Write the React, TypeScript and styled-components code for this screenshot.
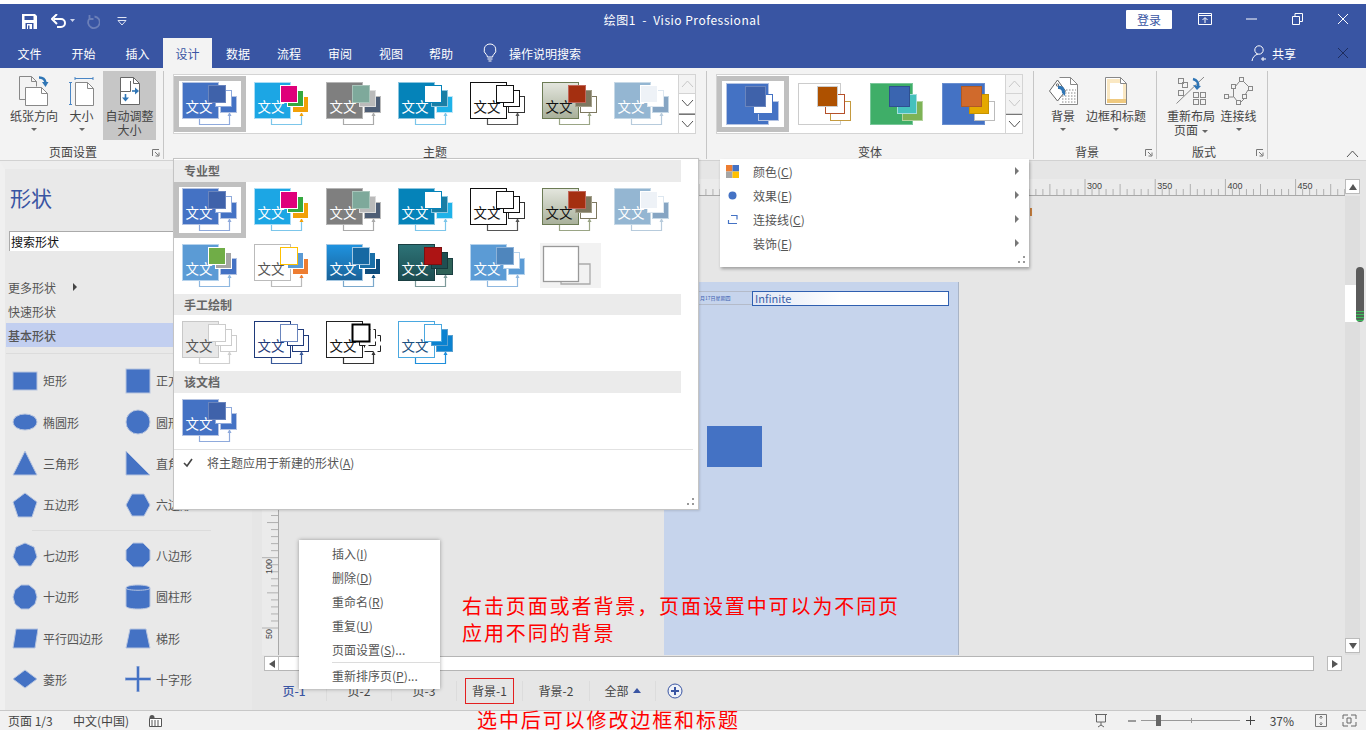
import React from 'react';
import styled, { createGlobalStyle } from 'styled-components';

const GlobalStyle = createGlobalStyle`
    html, body {
        margin: 0;
        padding: 0;
        background: #fff;
    }
    * {
        box-sizing: border-box;
    }
    u {
        text-underline-offset: 1px;
    }
`;

const BLUE = '#3955a3';
const FONT = '"Noto Sans CJK SC", "Noto Sans", sans-serif';
const RULER_FONT = '"Liberation Sans", sans-serif';

const StyledApp = styled.div`
    position: relative;
    width: 1366px;
    height: 730px;
    padding-top: 4px;
    display: flex;
    flex-direction: column;
    overflow: hidden;
    font-family: ${FONT};
    font-size: 12px;
    color: #444;
    background: #fff;
`;

/* title bar */
const TitleBar = styled.div`
    height: 34px;
    padding-bottom: 4px;
    background: ${BLUE};
    color: #fff;
    display: grid;
    grid-template-columns: 1fr auto 1fr;
    align-items: center;
`;
const QuickAccess = styled.div`
    display: flex;
    align-items: center;
    padding: 4px 0 0 22px;
`;
const QuickIcon = styled.svg<{ $ml?: number }>`
    margin-left: ${(p) => p.$ml ?? 0}px;
    flex: none;
`;
const WindowTitle = styled.div`
    margin-right: 2px;
    font-size: 12px;
    letter-spacing: 0.5px;
    white-space: pre;
`;
const WindowControls = styled.div`
    display: flex;
    align-items: center;
    justify-content: flex-end;
`;
const LoginButton = styled.div`
    width: 46px;
    height: 19px;
    background: #fff;
    color: ${BLUE};
    display: flex;
    align-items: center;
    justify-content: center;
    margin-right: 10px;
    border-radius: 1px;
`;
const WindowButton = styled.div`
    width: 46px;
    height: 30px;
    display: flex;
    align-items: center;
    justify-content: center;
`;

/* tabs */
const TabBar = styled.div`
    height: 30px;
    background: ${BLUE};
    color: #fff;
    display: flex;
    align-items: stretch;
    padding-left: 4px;
`;
const Tab = styled.div<{ $active?: boolean; $w: number }>`
    width: ${(p) => p.$w}px;
    display: flex;
    align-items: center;
    justify-content: center;
    background: ${(p) => (p.$active ? '#f3f3f3' : 'transparent')};
    color: ${(p) => (p.$active ? BLUE : '#fff')};
`;
const TellMe = styled.div`
    display: flex;
    align-items: center;
    gap: 12px;
    margin-left: 17px;
`;
const ShareArea = styled.div`
    margin-left: auto;
    display: flex;
    align-items: center;
    gap: 3px;
    padding-right: 17px;
`;
const TabClose = styled.div`
    margin-left: 38px;
    display: flex;
`;

/* ribbon */
const Ribbon = styled.div`
    height: 93px;
    flex: none;
    background: #f3f3f3;
    border-bottom: 1px solid #d2d2d2;
    display: flex;
`;
const RibbonGroup = styled.div<{ $w: number }>`
    position: relative;
    width: ${(p) => p.$w}px;
    display: flex;
    flex-direction: column;
    margin-top: 3px;
    margin-bottom: 1px;
    border-right: 1px solid #c6c6c6;
`;
const GroupBody = styled.div<{ $pad?: number }>`
    flex: 1;
    min-height: 0;
    display: flex;
    padding-left: ${(p) => p.$pad ?? 0}px;
`;
const GroupLabel = styled.div<{ $shift?: number }>`
    height: 14px;
    line-height: 14px;
    padding-right: ${(p) => p.$shift ?? 0}px;
    text-align: center;
    color: #444;
`;
const Launcher = styled.svg`
    position: absolute;
    right: 3px;
    bottom: 2px;
    width: 8px;
    height: 8px;
`;
const RibbonButton = styled.div<{ $w: number; $on?: boolean }>`
    width: ${(p) => p.$w}px;
    height: 69px;
    display: flex;
    flex-direction: column;
    align-items: center;
    padding-top: 3px;
    background: ${(p) => (p.$on ? '#c6c6c6' : 'transparent')};
    line-height: 14px;
    text-align: center;
    white-space: nowrap;
`;
const ButtonIcon = styled.div`
    height: 34px;
    margin-bottom: 1px;
    display: flex;
    align-items: center;
    justify-content: center;
`;
const Caret = styled.div`
    width: 0;
    height: 0;
    margin-top: 5px;
    border-left: 3px solid transparent;
    border-right: 3px solid transparent;
    border-top: 3px solid #666;
`;
const InlineCaret = styled(Caret)`
    display: inline-block;
    margin: 0 0 2px 4px;
`;
const Gallery = styled.div<{ $w: number }>`
    width: ${(p) => p.$w}px;
    height: 60px;
    margin-top: 3px;
    display: flex;
    background: #fff;
    border: 1px solid #d4d4d4;
`;
const GalleryItems = styled.div`
    flex: 1;
    display: flex;
    padding-top: 1px;
`;
const GalleryScroll = styled.div`
    width: 17px;
    display: flex;
    flex-direction: column;
    border-left: 1px solid #d4d4d4;
    background: #f3f3f3;
`;
const ScrollCell = styled.div<{ $strong?: boolean }>`
    flex: 1;
    display: flex;
    align-items: center;
    justify-content: center;
    border-bottom: 1px solid ${(p) => (p.$strong ? '#aaa' : '#d4d4d4')};
    background: ${(p) => (p.$strong ? '#fff' : '#f3f3f3')};
    &:last-child {
        border-bottom: 0;
        border-top: 1px solid #777;
    }
`;
const ThemeCell = styled.div<{ $selected?: boolean }>`
    width: 72px;
    height: 56px;
    flex: none;
    display: flex;
    align-items: center;
    justify-content: center;
    border: ${(p) => (p.$selected ? '5px solid #c0c0c0' : '0')};
`;
const CollapseRibbon = styled.div`
    position: absolute;
    right: 7px;
    top: 150px;
    display: flex;
`;

/* main */
const Main = styled.div`
    flex: 1;
    min-height: 0;
    display: flex;
    background: #e6e6e6;
`;
const Sidebar = styled.div`
    width: 262px;
    flex: none;
    padding-left: 5px;
    background: #e9e9e9;
    border-left: 5px solid #f0f0f0;
    border-top: 8px solid #eeeeee;
    border-right: 10px solid #e6e6e6;
    display: flex;
    flex-direction: column;
`;
const SidebarTitle = styled.div`
    height: 40px;
    margin-top: 8px;
    font-size: 21px;
    line-height: 40px;
    color: ${BLUE};
`;
const SearchBox = styled.div`
    height: 20px;
    margin: 14px 0 24px -1px;
    background: #fff;
    border-top: 1px solid #aaa;
    border-left: 1px solid #aaa;
    color: #111;
    line-height: 19px;
    padding-left: 1px;
`;
const StencilLink = styled.div<{ $on?: boolean }>`
    height: 24px;
    flex: none;
    padding-left: 2px;
    margin-left: -4px;
    color: #555;
    background: ${(p) => (p.$on ? '#c2cff0' : 'transparent')};
    font-weight: ${(p) => (p.$on ? 500 : 400)};
    display: flex;
    align-items: center;
    gap: 17px;
`;
const MoreArrow = styled.span`
    width: 0;
    height: 0;
    border-top: 4px solid transparent;
    border-bottom: 4px solid transparent;
    border-left: 4px solid #444;
`;
const SidebarRule = styled.div<{ $inset?: boolean }>`
    height: 1px;
    flex: none;
    background: #dcdcdc;
    margin: ${(p) => (p.$inset ? '4px 41px 4px 22px' : '6px 0 6px -4px')};
`;
const ShapeGrid = styled.div`
    margin-left: 2px;
    display: grid;
    grid-template-columns: 113px 113px;
    grid-auto-rows: 41.4px;
`;
const ShapeItem = styled.div`
    display: flex;
    align-items: center;
    gap: 5px;
    color: #555;
    white-space: nowrap;
`;
const ShapeIcon = styled.svg`
    width: 26px;
    height: 26px;
    flex: none;
`;

const Work = styled.div`
    flex: 1;
    min-width: 0;
    display: flex;
    flex-direction: column;
    padding-top: 18px;
`;
const RulerRow = styled.div`
    height: 17px;
    flex: none;
    display: flex;
    padding-left: 17px;
`;
const RulerTop = styled.svg`
    width: 1066px;
    height: 17px;
    display: block;
    background: #ebebeb;
`;
const CanvasRow = styled.div`
    height: 459px;
    flex: none;
    display: flex;
`;
const RulerLeft = styled.svg`
    width: 17px;
    height: 459px;
    background: #ebebeb;
    flex: none;
`;
const Canvas = styled.div`
    position: relative;
    flex: 1;
    background: #e6e6e6;
`;
const DrawingPage = styled.div`
    position: absolute;
    left: 385px;
    top: 86px;
    width: 295px;
    height: 373px;
    padding: 9px 0 0 9px;
    background: #c6d4ec;
    border-right: 1px solid #a9b4c6;
    display: flex;
    align-items: flex-start;
`;
const DateCell = styled.div`
    width: 79px;
    height: 14px;
    padding-left: 26px;
    border: 1px solid #b4bbc9;
    border-right: 0;
    font-size: 5px;
    line-height: 12px;
    color: #3a60b0;
    white-space: nowrap;
`;
const TitleBox = styled.div`
    width: 197px;
    height: 15px;
    padding-left: 2px;
    border: 1px solid #2f5fb0;
    background: linear-gradient(100deg, #dfe6f5 0%, #fff 45%);
    color: #3a60a8;
    font-size: 11px;
    line-height: 13px;
`;
const PageShape = styled.div`
    position: absolute;
    left: 43px;
    top: 144px;
    width: 55px;
    height: 41px;
    background: #4472c4;
`;
const Speck = styled.div`
    position: absolute;
    left: 751px;
    top: 12px;
    width: 2px;
    height: 8px;
    background: #c77f3f;
`;
const VScroll = styled.div`
    position: relative;
    width: 21px;
    display: flex;
    flex-direction: column;
`;
const VTrack = styled.div`
    width: 15px;
    flex: 1;
    background: #dedede;
    display: flex;
    flex-direction: column;
    justify-content: flex-end;
    padding-bottom: 2px;
`;
const ScrollArrow = styled.div`
    width: 15px;
    height: 15px;
    background: #fff;
    border: 1px solid #bbb;
    display: flex;
    align-items: center;
    justify-content: center;
    flex: none;
`;
const VThumb = styled.div`
    position: absolute;
    left: 0;
    top: 89px;
    width: 15px;
    height: 37px;
    background: #fff;
`;
const TouchHandle = styled.div`
    position: absolute;
    left: 11px;
    top: 71px;
    width: 8px;
    height: 55px;
    border-radius: 4px;
    background: repeating-linear-gradient(#3dbb5c 0 1px, #4f6a55 1px 3px) 0 44px / 100% 11px no-repeat, #5b5b5b;
`;
const HScrollRow = styled.div`
    height: 15px;
    flex: none;
    margin-top: 1px;
    display: flex;
    align-items: center;
    padding-left: 2px;
`;
const HTrack = styled.div`
    width: 1035px;
    height: 15px;
    background: #fff;
    border-top: 1px solid #b5b5b5;
    border-bottom: 1px solid #b5b5b5;
    border-right: 1px solid #b5b5b5;
`;
const HGap = styled.div`
    width: 13px;
`;
const PageTabs = styled.div`
    flex: 1;
    display: flex;
    align-items: center;
`;
const PageTab = styled.div<{ $active?: boolean; $w: number }>`
    width: ${(p) => p.$w}px;
    height: 20px;
    display: flex;
    align-items: center;
    justify-content: center;
    border-right: 1px solid #dcdcdc;
    color: ${(p) => (p.$active ? BLUE : '#444')};
    font-weight: ${(p) => (p.$active ? 500 : 400)};
`;
const MarkedLabel = styled.span`
    width: 49px;
    height: 26px;
    border: 1px solid #e32020;
    display: flex;
    align-items: center;
    justify-content: center;
`;
const UpCaret = styled.span`
    width: 0;
    height: 0;
    margin-left: 4px;
    border-left: 4px solid transparent;
    border-right: 4px solid transparent;
    border-bottom: 5px solid ${BLUE};
`;
const AddPage = styled.div`
    margin-left: 11px;
    display: flex;
`;

/* status bar */
const StatusBar = styled.div`
    height: 20px;
    flex: none;
    background: #f1f1f1;
    border-top: 1px solid #c8c8c8;
    display: flex;
    align-items: center;
    padding-left: 8px;
    color: #444;
`;
const StatusText = styled.span<{ $w: number }>`
    width: ${(p) => p.$w}px;
    white-space: pre;
`;
const StatusRight = styled.div`
    margin-left: auto;
    display: flex;
    align-items: center;
    padding-right: 9px;
`;
const StatusIcon = styled.svg<{ $mr?: number }>`
    margin-right: ${(p) => p.$mr ?? 0}px;
    flex: none;
`;
const ZoomTrack = styled.div`
    position: relative;
    width: 99px;
    height: 1px;
    margin-right: 6px;
    background: #999;
`;
const ZoomThumb = styled.div`
    position: absolute;
    left: 15px;
    top: -5px;
    width: 5px;
    height: 11px;
    background: #666;
`;
const ZoomTick = styled.div`
    position: absolute;
    left: 50px;
    top: -2px;
    width: 1px;
    height: 5px;
    background: #999;
`;
const ZoomValue = styled.span`
    margin: 0 21px 0 15px;
`;

/* floating menus */
const ThemeMenu = styled.div`
    position: absolute;
    left: 173px;
    top: 158px;
    width: 526px;
    height: 352px;
    padding-top: 1px;
    background: #fff;
    border: 1px solid #c4c4c4;
    box-shadow: 1px 1px 2px rgba(0, 0, 0, 0.12);
`;
const MenuHeader = styled.div`
    width: 507px;
    height: 21.67px;
    line-height: 21px;
    padding-left: 10px;
    background: #ebebeb;
    color: #666;
    font-weight: 700;
`;
const MenuThemes = styled.div`
    width: 504px;
    display: flex;
    flex-wrap: wrap;
`;
const MenuFootRule = styled.div`
    height: 1px;
    margin-right: 5px;
    background: #e2e2e2;
`;
const MenuFoot = styled.div`
    height: 26px;
    display: flex;
    align-items: center;
    padding-left: 9px;
    gap: 14px;
    color: #555;
`;
const Grip = styled.svg`
    position: absolute;
    right: 3px;
    bottom: 3px;
    width: 8px;
    height: 8px;
`;
const VariantMenu = styled.div`
    position: absolute;
    left: 720px;
    top: 159px;
    width: 309px;
    height: 108px;
    background: #fff;
    box-shadow: 1px 2px 3px rgba(0, 0, 0, 0.3);
`;
const VariantRow = styled.div`
    height: 24px;
    display: flex;
    align-items: center;
    padding-left: 6px;
    color: #555;
`;
const VariantIcon = styled.div`
    width: 27px;
    display: flex;
`;
const VariantArrow = styled.span`
    margin-left: auto;
    margin-right: 10px;
    width: 0;
    height: 0;
    border-top: 4px solid transparent;
    border-bottom: 4px solid transparent;
    border-left: 4px solid #777;
`;
const ContextMenu = styled.div`
    position: absolute;
    left: 299px;
    top: 540px;
    width: 141px;
    height: 149px;
    padding: 2px 0 0 33px;
    background: #fff;
    box-shadow: 0 0 4px rgba(0, 0, 0, 0.35);
    color: #555;
`;
const ContextItem = styled.div`
    height: 24px;
    line-height: 24px;
    white-space: nowrap;
`;
const ContextRule = styled.div`
    height: 1px;
    margin-bottom: 1px;
    background: #dcdcdc;
`;
const Annotation = styled.div<{ $x: number; $y: number }>`
    position: absolute;
    left: ${(p) => p.$x}px;
    top: ${(p) => p.$y}px;
    color: #f00;
    font-size: 20px;
    letter-spacing: 1.9px;
    line-height: 27px;
    white-space: pre;
`;

type Palette = {
    main: string;
    mainEnd?: string;
    border: string;
    accent: string;
    accentBorder?: string;
    second: string;
    secondBorder?: string;
    third: string;
    thirdBorder?: string;
    line: string;
    text: string;
    accentStroke?: number;
    dashed?: boolean;
};

const p = (
    main: string,
    border: string,
    accent: string,
    second: string,
    third: string,
    line: string,
    text = '#fff',
    extra: Partial<Palette> = {},
): Palette => ({ main, border, accent, second, third, line, text, ...extra });

const OFFICE = p('#4472c4', '#b4c3e2', '#3f62aa', '#fff', '#4472c4', '#8faadc', '#fff', {
    accentBorder: '#6a85bd',
    secondBorder: '#8faadc',
    thirdBorder: '#b4c3e2',
});
const ROW_ONE: Palette[] = [
    OFFICE,
    p('#1ca6e4', '#a9dcf5', '#df007a', '#35a83f', '#f2a007', '#7cc6ea', '#fff', { accentBorder: '#fff', secondBorder: '#fff', thirdBorder: '#fff' }),
    p('#7f7f7f', '#b5b5b5', '#7ea99b', '#bababa', '#4d5d75', '#aaa', '#fff', { accentBorder: '#a8c4ba', secondBorder: '#ddd', thirdBorder: '#bbb' }),
    p('#0583b9', '#8cc5de', '#fff', '#1a7ea4', '#1eb2e8', '#7cc6ea', '#fff', { accentBorder: '#0583b9', secondBorder: '#8cc5de', thirdBorder: '#bfe6f7' }),
    p('#fff', '#111', '#fff', '#fff', '#fff', '#555', '#111', { accentBorder: '#111', secondBorder: '#111', thirdBorder: '#333' }),
    p('#e4e6de', '#6c7b55', '#a42f10', '#7d7860', '#fff', '#9aa585', '#111', { mainEnd: '#a8b09a', accentBorder: '#c0665a', secondBorder: '#a39f8a', thirdBorder: '#7d7860' }),
    p('#94b6d2', '#c6d8e6', '#eef2f7', '#fff', '#86a5c3', '#b7cbdc', '#fff', { accentBorder: '#fff', secondBorder: '#dde7f0', thirdBorder: '#c6d8e6' }),
];
const ROW_TWO: Palette[] = [
    p('#5b9bd5', '#b5d2ec', '#70ad47', '#a5a5a5', '#4472c4', '#8fb8e0', '#fff', { accentBorder: '#fff', secondBorder: '#fff', thirdBorder: '#b4c3e2' }),
    p('#fff', '#bbb', '#fff', '#5b9bd5', '#ed7d31', '#bbb', '#555', { accentBorder: '#ffc000', secondBorder: '#fff', thirdBorder: '#fff' }),
    p('#1f93e0', '#a6c8e2', '#1769a3', '#1a6fa8', '#0f4d7d', '#7aa8cc', '#fff', { mainEnd: '#1a6298', accentBorder: '#a6c8e2', secondBorder: '#fff', thirdBorder: '#fff' }),
    p('#2d7377', '#1a3f42', '#ad1414', '#1f4f52', '#2f6258', '#7d9a9a', '#fff', { mainEnd: '#1c4c50', accentBorder: '#7d1010', secondBorder: '#163a3c', thirdBorder: '#1a3f42' }),
    p('#5b9bd5', '#b5d2ec', '#4f86bd', '#fff', '#5b9bd5', '#8fb8e0', '#fff', { accentBorder: '#8db2d8', secondBorder: '#b5d2ec', thirdBorder: '#b5d2ec' }),
];
const SKETCH: Palette[] = [
    p('#e8e8e8', '#c8c8c8', '#fff', '#fff', '#fff', '#cfcfcf', '#555', { accentBorder: '#ccc', secondBorder: '#ccc', thirdBorder: '#ccc' }),
    p('#fff', '#1f3a7a', '#fff', '#fff', '#fff', '#3a5a9a', '#1f3a7a', { accentBorder: '#6a85bd', secondBorder: '#1f3a7a', thirdBorder: '#1f3a7a' }),
    p('#fff', '#222', '#fff', '#fff', '#fff', '#333', '#111', { accentBorder: '#000', secondBorder: '#222', thirdBorder: '#222', accentStroke: 2, dashed: true }),
    p('#fff', '#4aa8e0', '#fff', '#0b82d0', '#0b82d0', '#1f8fdb', '#1a4f7f', { accentBorder: '#4aa8e0', secondBorder: '#5aa0d0', thirdBorder: '#5aa0d0' }),
];
const VARIANTS: Palette[] = [
    p('#4472c4', '#b4c3e2', '#3f62aa', '#fff', '#4472c4', '', '#fff', { accentBorder: '#6a85bd', secondBorder: '#4472c4', thirdBorder: '#b4c3e2' }),
    p('#fff', '#ccc', '#ae5100', '#fff', '#fff', '', '#fff', { accentBorder: '#ccc', secondBorder: '#b5502a', thirdBorder: '#c49a3f' }),
    p('#3fae68', '#7ac79a', '#3a65b0', '#45c1bd', '#7eb356', '', '#fff', { accentBorder: '#2e5090', secondBorder: '#a5dedc', thirdBorder: '#b4d39e' }),
    p('#4472c4', '#6a8fd0', '#d06a2c', '#e5a900', '#fff', '', '#fff', { accentBorder: '#b05a24', secondBorder: '#c69300', thirdBorder: '#bbb' }),
];

let gradientSeed = 0;

const ThemeThumb = ({ c }: { c: Palette }) => {
    gradientSeed += 1;
    const id = `thumb-${gradientSeed}`;
    return (
        <svg width="56" height="44" viewBox="0 0 56 44">
            {c.mainEnd && (
                <defs>
                    <linearGradient id={id} x1="0" y1="0" x2="0" y2="1">
                        <stop offset="0" stopColor={c.main} />
                        <stop offset="1" stopColor={c.mainEnd} />
                    </linearGradient>
                </defs>
            )}
            <path d="M17.500 37v5.500h30V34" fill="none" stroke={c.line} strokeWidth="1.2" />
            <path d="M47.500 30l-2 4h4z" fill={c.thirdBorder === '#fff' ? c.third : c.line} />
            <rect x="0.5" y="0.5" width="36" height="36" fill={c.mainEnd ? `url(#${id})` : c.main} stroke={c.border} />
            <rect x="38.5" y="14.5" width="16" height="16" fill={c.third} stroke={c.thirdBorder} strokeDasharray={c.dashed ? '9 4' : undefined} />
            <rect x="33.5" y="8.5" width="16" height="16" fill={c.second} stroke={c.secondBorder} strokeDasharray={c.dashed ? '11 3' : undefined} />
            <rect x="26.5" y="3.5" width="17" height="17" fill={c.accent} stroke={c.accentBorder} strokeWidth={c.accentStroke ?? 1} />
            <text x="3.5" y="30" fontSize="13.5" fill={c.text} fontFamily={FONT}>
                文文
            </text>
        </svg>
    );
};

const VariantThumb = ({ c }: { c: Palette }) => (
    <svg width="54" height="43" viewBox="0 0 54 43">
        <rect x="0.5" y="0.5" width="42" height="41" fill={c.main} stroke={c.border} />
        <rect x="32.5" y="18.5" width="20" height="19" fill={c.third} stroke={c.thirdBorder} />
        <rect x="27.5" y="11.5" width="19" height="19" fill={c.second} stroke={c.secondBorder} />
        <rect x="19.5" y="3.5" width="20" height="20" fill={c.accent} stroke={c.accentBorder} />
    </svg>
);

const BlankThumb = () => (
    <svg width="61" height="45" viewBox="0 0 61 45">
        <rect width="61" height="45" fill="#f2f2f2" />
        <path d="M21 36v5h29V21H36" fill="none" stroke="#aaa" strokeWidth="1.3" />
        <rect x="3.5" y="3.5" width="35" height="35" fill="#fff" stroke="#999" strokeWidth="1.3" />
    </svg>
);

const Chevron = ({ up, color = '#666' }: { up?: boolean; color?: string }) => (
    <svg width="13" height="8" viewBox="0 0 13 8">
        <path d={up ? 'M1 7l5.500-6L12 7' : 'M1 1l5.500 6L12 1'} fill="none" stroke={color} />
    </svg>
);

const GalleryScrollBar = ({ active }: { active?: boolean }) => (
    <GalleryScroll>
        <ScrollCell>
            <Chevron up color="#c8c8c8" />
        </ScrollCell>
        <ScrollCell $strong={active}>
            <Chevron color={active ? '#555' : '#c8c8c8'} />
        </ScrollCell>
        <ScrollCell $strong>
            <Chevron color="#555" />
        </ScrollCell>
    </GalleryScroll>
);

const OrientationIcon = () => (
    <svg width="30" height="30" viewBox="0 0 30 30">
        <path d="M6 23.500H.5V.5h12l5 5v5" fill="none" stroke="#888" />
        <path d="M12.500.5v5h5" fill="none" stroke="#888" />
        <path d="M6.500 11.500h16l6 6v12h-22z" fill="#fff" stroke="#888" />
        <path d="M22.500 11.500v6h6" fill="none" stroke="#888" />
        <path d="M20 1.500c4 0 6 1.500 6.500 5" fill="none" stroke="#2f75b5" strokeWidth="2.4" />
        <path d="M23 6l3.500 5 3-5z" fill="#2f75b5" />
    </svg>
);
const SizeIcon = () => (
    <svg width="25" height="29" viewBox="0 0 25 29">
        <path d="M6 1.500h18M6 0v3M24 0v3M1.500 5v23M0 5.500h3M0 27.500h3" fill="none" stroke="#4a86c5" />
        <path d="M6.500 5.500h12l6 6v17h-18z" fill="#fff" stroke="#888" />
        <path d="M18.500 5.500v6h6" fill="none" stroke="#888" />
    </svg>
);
const AutoSizeIcon = () => (
    <svg width="20" height="28" viewBox="0 0 20 28">
        <path d="M.5.500h13l6 6v21H.5z" fill="#fff" stroke="#666" />
        <path d="M13.500.5v6h6" fill="none" stroke="#666" />
        <path d="M.5 14.500h10V4" fill="none" stroke="#666" />
        <path d="M12 14h4" stroke="#2f75b5" strokeWidth="1.6" />
        <path d="M15 10.500l4 3.500-4 3.500z" fill="#2f75b5" />
        <path d="M5.500 17v4" stroke="#2f75b5" strokeWidth="1.6" />
        <path d="M2 20.500l3.500 4 3.500-4z" fill="#2f75b5" />
    </svg>
);
const BackgroundIcon = () => (
    <svg width="29" height="28" viewBox="0 0 29 28">
        <path d="M10.500.5h11l7 7v20h-18" fill="#fff" stroke="#888" />
        <path d="M21.500.5v7h7" fill="none" stroke="#888" />
        <path d="M17 13h10M13 16h14M13 19h14M13 22h14M13 25h14" stroke="#888" strokeDasharray="1.500 1.500" />
        <path d="M8.500 3l8 11-8 10L.5 14z" fill="#fff" stroke="#666" />
        <circle cx="8.500" cy="8" r="1.200" fill="none" stroke="#666" />
        <path d="M9 9c5-1 8 3 7 10l-3-3c0-3-1-4-4-4z" fill="#2f75b5" />
    </svg>
);
const BorderIcon = () => (
    <svg width="22" height="28" viewBox="0 0 22 28">
        <path d="M.5.500h15l6 6v21H.5z" fill="#fff" stroke="#888" />
        <path d="M15.500.5v6h6" fill="none" stroke="#888" />
        <path d="M2 2h13v4H5v16H2z" fill="#fae8c3" />
        <path d="M18 7h3v16h-3z" fill="#fae8c3" />
        <path d="M2 22h19v4H2z" fill="#efc97f" />
    </svg>
);
const RelayoutIcon = () => (
    <svg width="30" height="28" viewBox="0 0 30 28">
        <g fill="none" stroke="#888">
            <rect x="2.5" y="1.500" width="5" height="5" />
            <rect x="6.500" y="5.500" width="5" height="5" />
            <rect x="2.500" y="13.500" width="5" height="5" />
            <rect x="17.500" y="15.500" width="5" height="5" />
            <rect x="24.500" y="15.500" width="5" height="5" />
            <rect x="17.500" y="22.500" width="5" height="5" />
            <rect x="24.500" y="22.500" width="5" height="5" />
        </g>
        <path d="M.5 26.500L28 0" stroke="#888" fill="none" />
        <path d="M17 2c4 1 6 4 5 8" fill="none" stroke="#2f75b5" strokeWidth="2.400" />
        <path d="M17 8l4 5 4-4z" fill="#2f75b5" />
    </svg>
);
const ConnectorIcon = () => (
    <svg width="29" height="28" viewBox="0 0 29 28">
        <g fill="none" stroke="#888">
            <rect x="15.500" y="0.500" width="4" height="4" />
            <rect x="24.500" y="9.500" width="4" height="4" />
            <rect x="7.500" y="7.500" width="4" height="4" />
            <rect x="0.500" y="17.500" width="4" height="4" />
            <rect x="18.500" y="17.500" width="4" height="4" />
            <rect x="12.500" y="23.500" width="4" height="4" />
        </g>
        <path d="M19 4l6 6M24 13l-3 5M11 10l4-5M9.500 12v8H4.500M10 20l3 4M20.500 21.500l-4 4" fill="none" stroke="#888" />
    </svg>
);

const shapeFill = { fill: '#4472c4', stroke: '#b8c5df', strokeWidth: 1 };

const SHAPES: { name: string; el: React.ReactNode }[] = [
    { name: '矩形', el: <rect x="1" y="4" width="24" height="18" {...shapeFill} /> },
    { name: '正方形', el: <rect x="1" y="1" width="24" height="24" {...shapeFill} /> },
    { name: '椭圆形', el: <ellipse cx="13" cy="13" rx="12" ry="8" {...shapeFill} /> },
    { name: '圆形', el: <circle cx="13" cy="13" r="12" {...shapeFill} /> },
    { name: '三角形', el: <path d="M13 1l12 24H1z" {...shapeFill} /> },
    { name: '直角三角形', el: <path d="M1 1l24 24H1z" {...shapeFill} /> },
    { name: '五边形', el: <path d="M13 1l12 9-5 15H6L1 10z" {...shapeFill} /> },
    { name: '六边形', el: <path d="M7 2h12l6 11-6 11H7L1 13z" {...shapeFill} /> },
];
const SHAPES_TWO: { name: string; el: React.ReactNode }[] = [
    { name: '七边形', el: <path d="M13 1l9 4 3 10-6 9H7l-6-9 3-10z" {...shapeFill} /> },
    { name: '八边形', el: <path d="M8 1h10l7 7v10l-7 7H8l-7-7V8z" {...shapeFill} /> },
    { name: '十边形', el: <path d="M9 1h8l6 5 2 7-2 7-6 5H9l-6-5-2-7 2-7z" {...shapeFill} /> },
    {
        name: '圆柱形',
        el: (
            <>
                <path d="M1 4c0-4 24-4 24 0v18c0 4-24 4-24 0z" {...shapeFill} />
                <path d="M1 4c0 3 24 3 24 0" fill="none" stroke="#b8c5df" />
            </>
        ),
    },
    { name: '平行四边形', el: <path d="M4 4h22l-3 19H1z" {...shapeFill} /> },
    { name: '梯形', el: <path d="M5 4h16l4 19H1z" {...shapeFill} /> },
    { name: '菱形', el: <path d="M13 4l12 9-12 9-12-9z" {...shapeFill} /> },
    { name: '十字形', el: <path d="M11.500 0h3v11.500H26v3H14.500V26h-3V14.500H0v-3h11.500z" {...shapeFill} /> },
];

const ShapeList = ({ items }: { items: { name: string; el: React.ReactNode }[] }) => (
    <ShapeGrid>
        {items.map((s) => (
            <ShapeItem key={s.name}>
                <ShapeIcon viewBox="0 0 26 26">{s.el}</ShapeIcon>
                {s.name}
            </ShapeItem>
        ))}
    </ShapeGrid>
);

const TABS: [string, number][] = [
    ['文件', 51],
    ['开始', 57],
    ['插入', 51],
    ['设计', 49],
    ['数据', 52],
    ['流程', 50],
    ['审阅', 52],
    ['视图', 50],
    ['帮助', 50],
];

const TopRuler = () => {
    const ticks = Array.from({ length: 180 }, (_, i) => i);
    return (
        <RulerTop viewBox="0 0 1066 17">
            {ticks.map((i) => {
                const x = 806 + (i - 110) * 7.02;
                const major = (i - 110) % 10 === 0;
                const mid = (i - 110) % 5 === 0;
                return <line key={i} x1={x} x2={x} y1={major ? 0 : mid ? 5 : 10} y2={16} stroke="#b0b0b0" />;
            })}
            <line x1="0" x2="1066" y1="16.5" y2="16.5" stroke="#a8a8a8" />
            {[300, 350, 400, 450].map((n, i) => (
                <text key={n} x={808 + i * 70.2} y="9.5" fontSize="9" fill="#444" fontFamily={RULER_FONT}>
                    {n}
                </text>
            ))}
        </RulerTop>
    );
};

const LeftRuler = () => {
    const ticks = Array.from({ length: 66 }, (_, i) => i);
    return (
        <RulerLeft viewBox="0 0 17 459">
            {ticks.map((i) => {
                const y = 432 - i * 7.03;
                const major = i % 10 === 0;
                const mid = i % 5 === 0;
                return <line key={i} x1={major ? 0 : mid ? 5 : 9} x2={16} y1={y} y2={y} stroke="#b0b0b0" />;
            })}
            <line x1="16.5" x2="16.5" y1="0" y2="459" stroke="#a8a8a8" />
            {[
                ['100', 378],
                ['50', 443],
            ].map(([n, y]) => (
                <text key={n} transform={`rotate(-90 10 ${y})`} x="10" y={y} fontSize="9" fill="#444" fontFamily={RULER_FONT}>
                    {n}
                </text>
            ))}
        </RulerLeft>
    );
};

const Tri = ({ dir }: { dir: 'up' | 'down' | 'left' | 'right' }) => {
    const d = { up: 'M4 1l4 6H0z', down: 'M0 1h8L4 7z', left: 'M7 0v8L1 4z', right: 'M1 0v8l6-4z' }[dir];
    return (
        <svg width="8" height="8" viewBox="0 0 8 8">
            <path d={d} fill="#555" />
        </svg>
    );
};

const X = ({ color = '#fff' }: { color?: string }) => (
    <svg width="12" height="12" viewBox="0 0 12 12">
        <path d="M1 1l10 10M11 1L1 11" stroke={color} strokeWidth="1" />
    </svg>
);

const GripDots = () => (
    <Grip viewBox="0 0 8 8">
        <path d="M5 0h2v2H5zM5 5h2v2H5zM0 5h2v2H0z" fill="#999" />
    </Grip>
);

const LauncherIcon = () => (
    <Launcher viewBox="0 0 8 8">
        <path d="M.5 7V.5H7M3 3l3.500 3.500M7 3.500V7H3.500" fill="none" stroke="#777" />
    </Launcher>
);

const App = () => {
    return (
        <StyledApp>
            <GlobalStyle />
            <TitleBar>
                <QuickAccess>
                    <QuickIcon width="15" height="15" viewBox="0 0 15 15">
                        <path d="M0 0h13l2 2v13H0z" fill="#fff" />
                        <path d="M2.500 2h9v4h-9z" fill={BLUE} />
                        <path d="M3.500 9h8v6h-8z" fill={BLUE} />
                        <path d="M5 10h5v5H5z" fill="#fff" />
                        <path d="M6 11.500h1.500V15H6z" fill={BLUE} />
                    </QuickIcon>
                    <QuickIcon $ml={14} width="24" height="14" viewBox="0 0 24 14">
                        <path d="M3 5h7a4 4 0 0 1 0 8H6" fill="none" stroke="#fff" strokeWidth="2" />
                        <path d="M6 0L1 5l5 5" fill="none" stroke="#fff" strokeWidth="2" />
                        <path d="M19 5h5l-2.500 3z" fill="#cdd5ec" />
                    </QuickIcon>
                    <QuickIcon $ml={11} width="14" height="15" viewBox="0 0 14 15">
                        <path d="M8.500 2.500A5.800 5.800 0 1 1 3.500 4.500M3.500 1v4h4" fill="none" stroke="#6b7fb8" strokeWidth="1.800" />
                    </QuickIcon>
                    <QuickIcon $ml={17} width="10" height="9" viewBox="0 0 10 9">
                        <path d="M.5.500h9M1 3.500h8L5 8z" fill="none" stroke="#dfe4f3" />
                    </QuickIcon>
                </QuickAccess>
                <WindowTitle>绘图1  -  Visio Professional</WindowTitle>
                <WindowControls>
                    <LoginButton>登录</LoginButton>
                    <WindowButton>
                        <svg width="14" height="12" viewBox="0 0 14 12">
                            <path d="M.5.500h13v11H.5zM.5 2.500h13M7 10V5M4.500 7L7 4.500 9.500 7" fill="none" stroke="#fff" />
                        </svg>
                    </WindowButton>
                    <WindowButton>
                        <svg width="11" height="2" viewBox="0 0 11 2">
                            <path d="M0 1h11" stroke="#fff" />
                        </svg>
                    </WindowButton>
                    <WindowButton>
                        <svg width="11" height="12" viewBox="0 0 11 12">
                            <path d="M.5 3.500h7v8h-7zM3 3.500V.5h7.500v8h-3" fill="none" stroke="#fff" />
                        </svg>
                    </WindowButton>
                    <WindowButton>
                        <X />
                    </WindowButton>
                </WindowControls>
            </TitleBar>
            <TabBar>
                {TABS.map(([name, w]) => (
                    <Tab key={name} $w={w} $active={name === '设计'}>
                        {name}
                    </Tab>
                ))}
                <TellMe>
                    <svg width="14" height="20" viewBox="0 0 14 20">
                        <path d="M7 1a6 6 0 0 0-3.500 10.800c.6.6.9 1.400.9 2.200h5.200c0-.8.3-1.600.9-2.200A6 6 0 0 0 7 1zM4.500 16h5M5.500 18h3" fill="none" stroke="#fff" />
                    </svg>
                    操作说明搜索
                </TellMe>
                <ShareArea>
                    <svg width="18" height="18" viewBox="0 0 18 18">
                        <circle cx="8" cy="6" r="4.200" fill="none" stroke="#fff" />
                        <path d="M1 17c.5-4 3-6 6-7M12 13v4M10 15h5" fill="none" stroke="#fff" />
                    </svg>
                    共享
                    <TabClose>
                        <X color="#1e2d5e" />
                    </TabClose>
                </ShareArea>
            </TabBar>
            <Ribbon>
                <RibbonGroup $w={164}>
                    <GroupBody $pad={8}>
                        <RibbonButton $w={52}>
                            <ButtonIcon>
                                <OrientationIcon />
                            </ButtonIcon>
                            纸张方向
                            <Caret />
                        </RibbonButton>
                        <RibbonButton $w={43}>
                            <ButtonIcon>
                                <SizeIcon />
                            </ButtonIcon>
                            大小
                            <Caret />
                        </RibbonButton>
                        <RibbonButton $w={53} $on>
                            <ButtonIcon>
                                <AutoSizeIcon />
                            </ButtonIcon>
                            自动调整
                            <br />
                            大小
                        </RibbonButton>
                    </GroupBody>
                    <GroupLabel $shift={17}>页面设置</GroupLabel>
                    <LauncherIcon />
                </RibbonGroup>
                <RibbonGroup $w={543}>
                    <GroupBody $pad={9}>
                        <Gallery $w={523}>
                            <GalleryItems>
                                {ROW_ONE.map((c, i) => (
                                    <ThemeCell key={i} $selected={i === 0}>
                                        <ThemeThumb c={c} />
                                    </ThemeCell>
                                ))}
                            </GalleryItems>
                            <GalleryScrollBar active />
                        </Gallery>
                    </GroupBody>
                    <GroupLabel>主题</GroupLabel>
                </RibbonGroup>
                <RibbonGroup $w={327}>
                    <GroupBody $pad={9}>
                        <Gallery $w={307}>
                            <GalleryItems>
                                {VARIANTS.map((c, i) => (
                                    <ThemeCell key={i} $selected={i === 0}>
                                        <VariantThumb c={c} />
                                    </ThemeCell>
                                ))}
                            </GalleryItems>
                            <GalleryScrollBar />
                        </Gallery>
                    </GroupBody>
                    <GroupLabel>变体</GroupLabel>
                </RibbonGroup>
                <RibbonGroup $w={123}>
                    <GroupBody $pad={6}>
                        <RibbonButton $w={46}>
                            <ButtonIcon>
                                <BackgroundIcon />
                            </ButtonIcon>
                            背景
                            <Caret />
                        </RibbonButton>
                        <RibbonButton $w={60}>
                            <ButtonIcon>
                                <BorderIcon />
                            </ButtonIcon>
                            边框和标题
                            <Caret />
                        </RibbonButton>
                    </GroupBody>
                    <GroupLabel $shift={16}>背景</GroupLabel>
                    <LauncherIcon />
                </RibbonGroup>
                <RibbonGroup $w={111}>
                    <GroupBody $pad={5}>
                        <RibbonButton $w={58}>
                            <ButtonIcon>
                                <RelayoutIcon />
                            </ButtonIcon>
                            重新布局
                            <span>
                                页面
                                <InlineCaret />
                            </span>
                        </RibbonButton>
                        <RibbonButton $w={37}>
                            <ButtonIcon>
                                <ConnectorIcon />
                            </ButtonIcon>
                            连接线
                            <Caret />
                        </RibbonButton>
                    </GroupBody>
                    <GroupLabel $shift={16}>版式</GroupLabel>
                    <LauncherIcon />
                </RibbonGroup>
            </Ribbon>
            <CollapseRibbon>
                <Chevron up color="#555" />
            </CollapseRibbon>
            <Main>
                <Sidebar>
                    <SidebarTitle>形状</SidebarTitle>
                    <SearchBox>搜索形状</SearchBox>
                    <StencilLink>
                        更多形状
                        <MoreArrow />
                    </StencilLink>
                    <StencilLink>快速形状</StencilLink>
                    <StencilLink $on>基本形状</StencilLink>
                    <SidebarRule />
                    <ShapeList items={SHAPES} />
                    <SidebarRule $inset />
                    <ShapeList items={SHAPES_TWO} />
                </Sidebar>
                <Work>
                    <RulerRow>
                        <TopRuler />
                        <ScrollArrow>
                            <Tri dir="up" />
                        </ScrollArrow>
                    </RulerRow>
                    <CanvasRow>
                        <LeftRuler />
                        <Canvas>
                            <DrawingPage>
                                <DateCell>月17日星期四</DateCell>
                                <TitleBox>Infinite</TitleBox>
                                <PageShape />
                            </DrawingPage>
                            <Speck />
                        </Canvas>
                        <VScroll>
                            <VTrack>
                                <ScrollArrow>
                                    <Tri dir="down" />
                                </ScrollArrow>
                            </VTrack>
                            <VThumb />
                            <TouchHandle />
                        </VScroll>
                    </CanvasRow>
                    <HScrollRow>
                        <ScrollArrow>
                            <Tri dir="left" />
                        </ScrollArrow>
                        <HTrack />
                        <HGap />
                        <ScrollArrow>
                            <Tri dir="right" />
                        </ScrollArrow>
                    </HScrollRow>
                    <PageTabs>
                        <PageTab $w={65} $active>页-1</PageTab>
                        <PageTab $w={65}>页-2</PageTab>
                        <PageTab $w={65}>页-3</PageTab>
                        <PageTab $w={66}>
                            <MarkedLabel>背景-1</MarkedLabel>
                        </PageTab>
                        <PageTab $w={67}>背景-2</PageTab>
                        <PageTab $w={66}>
                            全部
                            <UpCaret />
                        </PageTab>
                        <AddPage>
                            <svg width="16" height="16" viewBox="0 0 16 16">
                                <circle cx="8" cy="8" r="7" fill="#eef1f8" stroke="#3955a3" />
                                <path d="M8 4v8M4 8h8" stroke="#3955a3" strokeWidth="2" />
                            </svg>
                        </AddPage>
                    </PageTabs>
                </Work>
            </Main>
            <StatusBar>
                <StatusText $w={65}>页面 1/3</StatusText>
                <StatusText $w={76}>中文(中国)</StatusText>
                <svg width="13" height="12" viewBox="0 0 13 12">
                    <circle cx="3" cy="2.500" r="2.500" fill="#555" />
                    <path d="M.5 3.500h12v8H.5z" fill="#fff" stroke="#555" />
                    <path d="M2 6h9M2 8h9M2 10h9" stroke="#555" strokeDasharray="2 1" />
                </svg>
                <StatusRight>
                    <StatusIcon $mr={20} width="14" height="15" viewBox="0 0 14 15">
                        <path d="M1 1.500h12M2.500 2v7h9V2M7 9v3M4 14l3-2 3 2" fill="none" stroke="#666" />
                    </StatusIcon>
                    <StatusIcon $mr={5} width="8" height="8" viewBox="0 0 8 8">
                        <path d="M0 4h8" stroke="#444" />
                    </StatusIcon>
                    <ZoomTrack>
                        <ZoomThumb />
                        <ZoomTick />
                    </ZoomTrack>
                    <StatusIcon width="9" height="9" viewBox="0 0 9 9">
                        <path d="M0 4.500h9M4.500 0v9" stroke="#444" />
                    </StatusIcon>
                    <ZoomValue>37%</ZoomValue>
                    <StatusIcon $mr={15} width="12" height="13" viewBox="0 0 12 13">
                        <path d="M.5.500h11v12H.5zM6 2v3M4.500 3.500L6 2l1.500 1.500M6 11V8M4.500 9.500L6 11l1.500-1.500" fill="none" stroke="#777" />
                    </StatusIcon>
                    <StatusIcon width="15" height="13" viewBox="0 0 15 13">
                        <path d="M1 5V1h5M9 1h5v4M1 8v4h5M9 12h5V8M5 4h4v5H5z" fill="none" stroke="#666" />
                    </StatusIcon>
                </StatusRight>
            </StatusBar>

            <ThemeMenu>
                <MenuHeader>专业型</MenuHeader>
                <MenuThemes>
                    {ROW_ONE.map((c, i) => (
                        <ThemeCell key={i} $selected={i === 0}>
                            <ThemeThumb c={c} />
                        </ThemeCell>
                    ))}
                    {ROW_TWO.map((c, i) => (
                        <ThemeCell key={i}>
                            <ThemeThumb c={c} />
                        </ThemeCell>
                    ))}
                    <ThemeCell>
                        <BlankThumb />
                    </ThemeCell>
                </MenuThemes>
                <MenuHeader>手工绘制</MenuHeader>
                <MenuThemes>
                    {SKETCH.map((c, i) => (
                        <ThemeCell key={i}>
                            <ThemeThumb c={c} />
                        </ThemeCell>
                    ))}
                </MenuThemes>
                <MenuHeader>该文档</MenuHeader>
                <MenuThemes>
                    <ThemeCell>
                        <ThemeThumb c={OFFICE} />
                    </ThemeCell>
                </MenuThemes>
                <MenuFootRule />
                <MenuFoot>
                    <svg width="10" height="10" viewBox="0 0 10 10">
                        <path d="M1 5l3 3 5-7" fill="none" stroke="#444" strokeWidth="1.600" />
                    </svg>
                    <span>
                        将主题应用于新建的形状(<u>A</u>)
                    </span>
                </MenuFoot>
                <GripDots />
            </ThemeMenu>

            <VariantMenu>
                <VariantRow>
                    <VariantIcon>
                        <svg width="13" height="13" viewBox="0 0 13 13">
                            <path d="M0 0h6.500v6.500H0z" fill="#ed7d31" />
                            <path d="M6.500 0H13v6.500H6.500z" fill="#4472c4" />
                            <path d="M0 6.500h6.500V13H0z" fill="#a5a5a5" />
                            <path d="M6.500 6.500H13V13H6.500z" fill="#ffc000" />
                        </svg>
                    </VariantIcon>
                    <span>
                        颜色(<u>C</u>)
                    </span>
                    <VariantArrow />
                </VariantRow>
                <VariantRow>
                    <VariantIcon>
                        <svg width="13" height="13" viewBox="0 0 13 13">
                            <circle cx="6.500" cy="6.500" r="4" fill="#4472c4" />
                        </svg>
                    </VariantIcon>
                    <span>
                        效果(<u>E</u>)
                    </span>
                    <VariantArrow />
                </VariantRow>
                <VariantRow>
                    <VariantIcon>
                        <svg width="13" height="13" viewBox="0 0 13 13">
                            <path d="M5 2.500h6v4M11 10.500H2.500V7" fill="none" stroke="#4472c4" strokeWidth="1.200" />
                        </svg>
                    </VariantIcon>
                    <span>
                        连接线(<u>C</u>)
                    </span>
                    <VariantArrow />
                </VariantRow>
                <VariantRow>
                    <VariantIcon />
                    <span>
                        装饰(<u>E</u>)
                    </span>
                    <VariantArrow />
                </VariantRow>
                <GripDots />
            </VariantMenu>

            <ContextMenu>
                <ContextItem>
                    插入(<u>I</u>)
                </ContextItem>
                <ContextItem>
                    删除(<u>D</u>)
                </ContextItem>
                <ContextItem>
                    重命名(<u>R</u>)
                </ContextItem>
                <ContextItem>
                    重复(<u>U</u>)
                </ContextItem>
                <ContextItem>
                    页面设置(<u>S</u>)...
                </ContextItem>
                <ContextRule />
                <ContextItem>
                    重新排序页(<u>P</u>)...
                </ContextItem>
            </ContextMenu>

            <Annotation $x={462} $y={592}>
                {'右击页面或者背景，页面设置中可以为不同页\n应用不同的背景'}
            </Annotation>
            <Annotation $x={477} $y={706}>
                选中后可以修改边框和标题
            </Annotation>
        </StyledApp>
    );
};

export default App;
